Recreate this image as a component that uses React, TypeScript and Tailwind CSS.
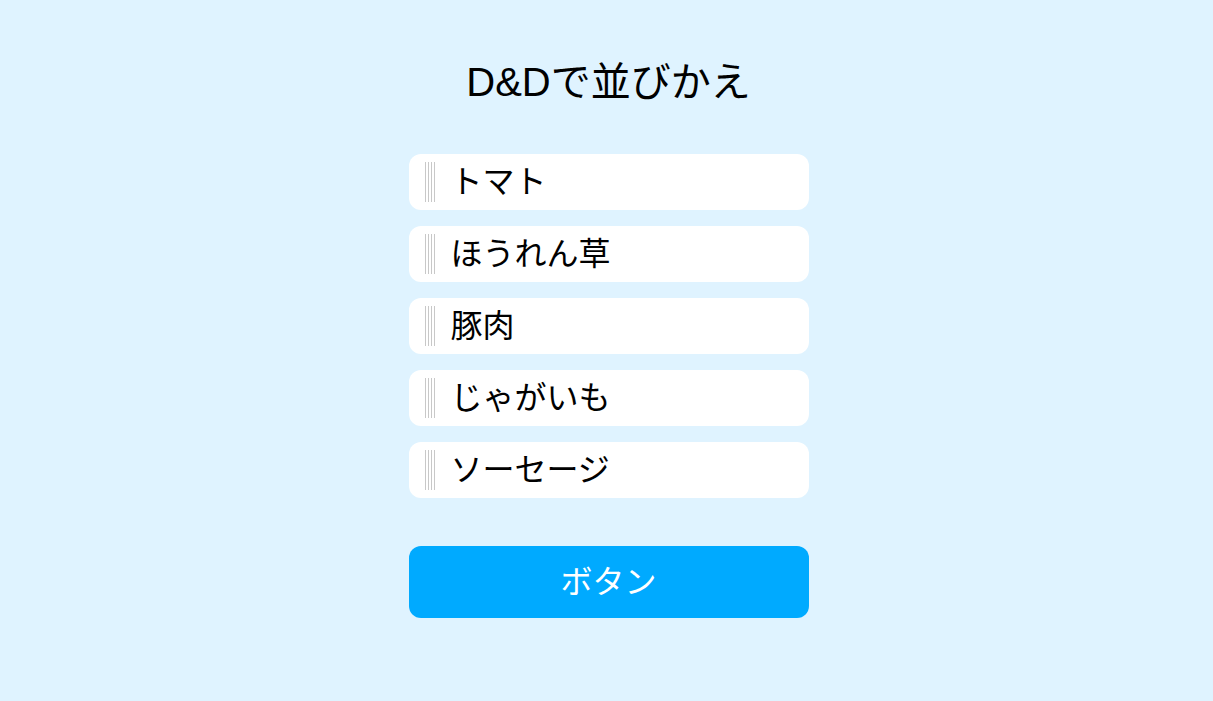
const items = ['トマト', 'ほうれん草', '豚肉', 'じゃがいも', 'ソーセージ'];

function Grip() {
  return (
    <div className="flex h-10 shrink-0 gap-[2px]">
      <span className="w-px h-full bg-[#c8c8c8]" />
      <span className="w-px h-full bg-[#c8c8c8]" />
      <span className="w-px h-full bg-[#c8c8c8]" />
      <span className="w-px h-full bg-[#c8c8c8]" />
    </div>
  );
}

export default function App() {
  return (
    <main
      className="min-h-screen bg-[#dff3ff] flex flex-col items-center pt-[56px] pl-[4px]"
      style={{ fontFamily: '"Liberation Sans", "Noto Sans CJK JP", sans-serif' }}
    >
      <h1 className="text-[40px] leading-[52px] text-black">D&amp;Dで並びかえ</h1>

      <ul className="mt-[46px] w-[400px] flex flex-col gap-4">
        {items.map((item) => (
          <li key={item} className="h-14 bg-white rounded-xl flex items-center pl-4">
            <Grip />
            <span className="ml-4 text-[32px] leading-none text-black">{item}</span>
          </li>
        ))}
      </ul>

      <button className="mt-12 w-[400px] h-[72px] rounded-xl bg-[#00aaff] text-white text-[32px] leading-none">
        ボタン
      </button>
    </main>
  );
}
